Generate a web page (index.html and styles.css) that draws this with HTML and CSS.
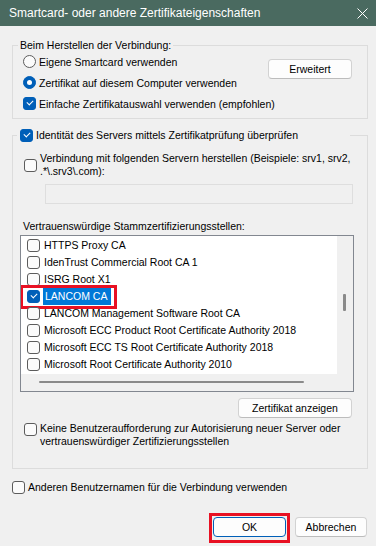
FILE: index.html
```html
<!DOCTYPE html>
<html lang="de">
<head>
<meta charset="utf-8">
<title>Smartcard- oder andere Zertifikateigenschaften</title>
<link rel="stylesheet" href="styles.css">
</head>
<body>
<div class="dialog">
  <div class="titlebar">
    <span class="title">Smartcard- oder andere Zertifikateigenschaften</span>
    <svg class="close" width="11" height="11" viewBox="0 0 11 11"><path d="M0.5 0.5 L10.5 10.5 M10.5 0.5 L0.5 10.5" stroke="#fff" stroke-width="1" fill="none"/></svg>
  </div>
  <div class="content">
    <div class="group group1">
      <div class="group-title">Beim Herstellen der Verbindung:</div>
      <div class="g1-grid">
        <div class="row"><span class="radio"></span><span class="lbl">Eigene Smartcard verwenden</span></div>
        <div class="row"><span class="radio checked"></span><span class="lbl">Zertifikat auf diesem Computer verwenden</span></div>
        <div class="row"><span class="cb checked"></span><span class="lbl">Einfache Zertifikatauswahl verwenden (empfohlen)</span></div>
        <button class="btn btn-erweitert">Erweitert</button>
      </div>
    </div>

    <div class="group group2">
      <div class="group-title g2-title"><span class="cb checked"></span><span class="lbl">Identität des Servers mittels Zertifikatprüfung überprüfen</span></div>
      <div class="row-multi center">
        <span class="cb"></span>
        <span class="lbl">Verbindung mit folgenden Servern herstellen (Beispiele: srv1, srv2,<br>.*\.srv3\.com):</span>
      </div>
      <div class="textbox"></div>
      <div class="list-label">Vertrauenswürdige Stammzertifizierungsstellen:</div>
      <div class="listbox">
        <div class="list-items">
          <div class="item"><span class="cb"></span><span class="itxt">HTTPS Proxy CA</span></div>
          <div class="item"><span class="cb"></span><span class="itxt">IdenTrust Commercial Root CA 1</span></div>
          <div class="item"><span class="cb"></span><span class="itxt">ISRG Root X1</span></div>
          <div class="item marked"><span class="cb checked"></span><span class="itxt selected">LANCOM CA</span><span class="redmark"></span></div>
          <div class="item"><span class="cb"></span><span class="itxt">LANCOM Management Software Root CA</span></div>
          <div class="item"><span class="cb"></span><span class="itxt">Microsoft ECC Product Root Certificate Authority 2018</span></div>
          <div class="item"><span class="cb"></span><span class="itxt">Microsoft ECC TS Root Certificate Authority 2018</span></div>
          <div class="item"><span class="cb"></span><span class="itxt">Microsoft Root Certificate Authority 2010</span></div>
        </div>
        <div class="vscroll"><span class="vthumb"></span></div>
        <div class="hscroll"><span class="hthumb"></span></div>
        <div class="corner"></div>
      </div>
      <div class="btn-row">
        <button class="btn btn-zert">Zertifikat anzeigen</button>
      </div>
      <div class="row-multi top keine">
        <span class="cb"></span>
        <span class="lbl">Keine Benutzeraufforderung zur Autorisierung neuer Server oder<br>vertrauenswürdiger Zertifizierungsstellen</span>
      </div>
    </div>

    <div class="row anderen"><span class="cb"></span><span class="lbl">Anderen Benutzernamen für die Verbindung verwenden</span></div>

    <div class="footer">
      <div class="ok-wrap">
        <button class="btn btn-ok">OK</button>
        <span class="okmark"></span>
      </div>
      <button class="btn btn-cancel">Abbrechen</button>
    </div>
  </div>
</div>
</body>
</html>
```
FILE: styles.css
```css
html, body {
  margin: 0;
  padding: 0;
}
body {
  background: #f0f0f0;
  font-family: "Liberation Sans", Arial, sans-serif;
  font-size: 10.5px;
  color: #000;
  width: 376px;
  height: 546px;
  overflow: hidden;
}
.titlebar {
  height: 26px;
  background: #4a6a60;
  color: #fff;
  display: flex;
  align-items: center;
  justify-content: space-between;
  padding: 0 8px 1px 9px;
  box-sizing: border-box;
}
.title {
  font-size: 12px;
  line-height: 16px;
}
.close {
  display: block;
  margin-top: 1px;
}
.content {
  padding: 0 8px 0 12px;
}
.group {
  border: 1px solid #dcdcdc;
}
.group1 {
  margin-top: 19px;
  height: 72px;
}
.group-title {
  width: fit-content;
  margin: -8px 0 0 5px;
  padding: 0 2px;
  background: #f0f0f0;
  line-height: 14px;
  height: 14px;
}
.g1-grid {
  display: grid;
  grid-template-columns: minmax(0, 1fr) auto;
  grid-template-rows: 21px 21px 21px;
  margin-top: -1px;
  padding-left: 10px;
}
.row {
  display: flex;
  align-items: center;
  grid-column: 1;
}
.lbl {
  line-height: 14px;
  white-space: nowrap;
}
.row .lbl, .g2-title .lbl {
  margin-left: 3px;
}
.btn {
  font-family: inherit;
  font-size: 10.5px;
  color: #000;
  background: #fdfdfd;
  border: 1px solid #d2d2d2;
  border-bottom-color: #bcbcbc;
  border-radius: 4px;
  height: 20px;
  padding: 0;
  box-sizing: border-box;
  line-height: 16px;
  display: block;
}
.btn-erweitert {
  grid-column: 2;
  grid-row: 1 / span 2;
  align-self: start;
  margin-top: 8px;
  margin-right: 15px;
  width: 84px;
}
.radio {
  width: 13px;
  height: 13px;
  border: 1px solid #5c5c5c;
  border-radius: 50%;
  box-sizing: border-box;
  background: #fbfbfb;
  flex: none;
  display: flex;
  align-items: center;
  justify-content: center;
}
.radio.checked {
  background: #005fb8;
  border-color: #005fb8;
}
.radio.checked::after {
  content: "";
  width: 5px;
  height: 5px;
  border-radius: 50%;
  background: #fff;
}
.cb {
  width: 13px;
  height: 13px;
  border: 1px solid #5c5c5c;
  border-radius: 3px;
  box-sizing: border-box;
  background: #fbfbfb;
  flex: none;
  position: relative;
}
.cb.checked {
  background: #005fb8;
  border-color: #005fb8;
}
.cb.checked::after {
  content: "";
  position: absolute;
  left: 3px;
  top: 2px;
  width: 5px;
  height: 3px;
  border-left: 1px solid #fff;
  border-bottom: 1px solid #fff;
  transform: rotate(-45deg);
  transform-origin: center;
}

/* group 2 */
.group2 {
  margin-top: 16px;
  height: 332px;
}
.g2-title {
  display: flex;
  align-items: center;
  width: 330px;
  margin: -8px 0 0 4px;
  padding: 0 0 0 3px;
}
.row-multi {
  display: flex;
  margin-left: 11px;
}
.row-multi.center {
  align-items: center;
  margin-top: 10px;
}
.row-multi .lbl {
  line-height: 13px;
  margin-left: 3px;
}
.row-multi.top {
  align-items: flex-start;
}
.row-multi.top .cb {
  margin-top: 1px;
}
.textbox {
  margin: 6px 0 0 32px;
  width: 308px;
  height: 20px;
  box-sizing: border-box;
  border: 1px solid #dedede;
  background: #f0f0f0;
}
.list-label {
  margin: 15px 0 0 10px;
  line-height: 14px;
}
.listbox {
  margin: 2px 0 0 7px;
  width: 334px;
  height: 157px;
  box-sizing: border-box;
  border: 1px solid #828790;
  display: grid;
  grid-template-columns: 316px 16px;
  grid-template-rows: 138px 17px;
  background: #fff;
}
.list-items {
  padding-top: 1px;
  overflow: hidden;
}
.item {
  height: 17px;
  display: flex;
  align-items: center;
  padding-left: 6px;
  position: relative;
}
.itxt {
  margin-left: 3px;
  padding: 0 2px 0 1px;
  line-height: 17px;
  white-space: nowrap;
}
.itxt.selected {
  background: #0078d7;
  color: #fff;
  padding: 0 4px 0 2px;
}
.redmark {
  position: absolute;
  left: -1px;
  top: -3px;
  width: 97px;
  height: 24px;
  box-sizing: border-box;
  border: 3px solid #e81123;
}
.vscroll {
  background: #f0f0f0;
  position: relative;
}
.vthumb {
  position: absolute;
  left: 6px;
  top: 58px;
  width: 3px;
  height: 17px;
  background: #8a8a8a;
  border-radius: 1px;
}
.hscroll {
  background: #f0f0f0;
  position: relative;
}
.hthumb {
  position: absolute;
  left: 18px;
  top: 7px;
  width: 265px;
  height: 2px;
  background: #8a8a8a;
  border-radius: 1px;
}
.corner {
  background: #f0f0f0;
}
.btn-row {
  display: flex;
  justify-content: flex-end;
  margin: 6px 15px 0 0;
}
.btn-zert {
  width: 114px;
}
.keine {
  margin-top: 4px;
}

.anderen {
  margin-top: 11px;
  height: 14px;
}
.footer {
  display: flex;
  justify-content: flex-end;
  gap: 9px;
  margin: 23px 1px 0 0;
}
.ok-wrap {
  position: relative;
}
.btn-ok {
  width: 73px;
  border-color: #005fb8;
}
.okmark {
  position: absolute;
  left: -4px;
  top: -4px;
  right: -4px;
  bottom: -6px;
  border: 3px solid #e81123;
}
.btn-cancel {
  width: 72px;
}
```
